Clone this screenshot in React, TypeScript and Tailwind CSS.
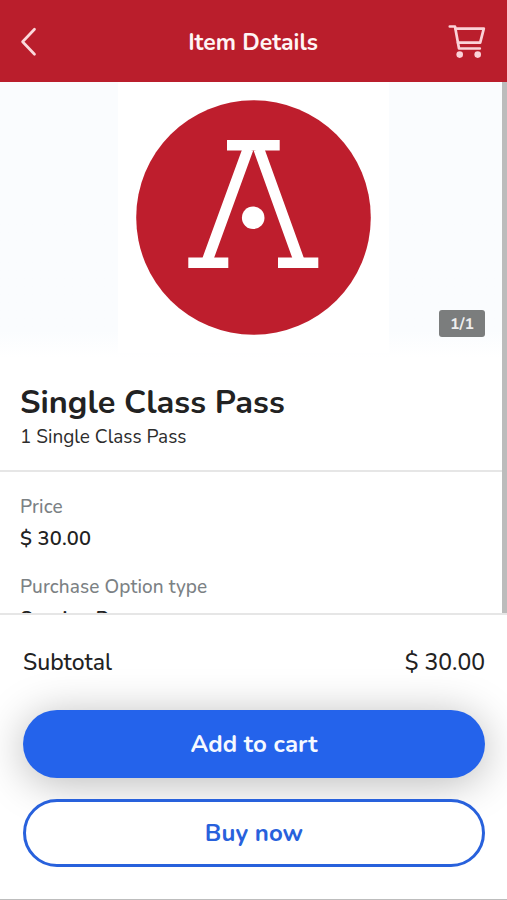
function CartIcon() {
  return (
    <svg className="h-9 w-10" viewBox="0 0 40 36" fill="none" stroke="#fbd3d8" strokeWidth="2.7" strokeLinecap="round" strokeLinejoin="round">
      <path d="M2.8 3.5h5.2l4 22h20.8" />
      <path d="M8.4 5.6h28.4l-3.6 14.1H11" />
      <circle cx="12.7" cy="31.6" r="3.3" fill="#fbd3d8" stroke="none" />
      <circle cx="30.7" cy="31.6" r="3.3" fill="#fbd3d8" stroke="none" />
    </svg>
  )
}

function StudioLogo() {
  return (
    <svg className="h-[235px] w-[235px]" viewBox="0 0 235 235" fill="none" stroke="#fff">
      <circle cx="117.5" cy="117.5" r="117.3" fill="#be1e2d" stroke="none" />
      <path d="M91 45.3h52.7M52.3 162.8h40M142 162.8h40.3" strokeWidth="10.6" />
      <path d="M112 49 71.5 160M122.8 49l40 111" strokeWidth="10.9" />
      <circle cx="117.2" cy="117.7" r="11.3" fill="#fff" stroke="none" />
    </svg>
  )
}

function Header() {
  return (
    <header className="flex h-[82px] shrink-0 items-center justify-between bg-[#ba1e2c] pr-5 pl-[19px]">
      <button aria-label="Back" className="w-10 pl-px">
        <svg className="h-8 w-5" viewBox="0 0 20 32" fill="none" stroke="#fbd9dc" strokeWidth="2.7" strokeLinecap="round" strokeLinejoin="round">
          <path d="M14.5 4.2 2.6 16.8l11.9 12.4" />
        </svg>
      </button>
      <h1 className="pt-1 text-[23px] font-bold text-[#fff5f5]">Item Details</h1>
      <button aria-label="Cart">
        <CartIcon />
      </button>
    </header>
  )
}

export default function App() {
  return (
    <div className="flex h-[900px] w-[507px] flex-col overflow-hidden border-b border-[#bdbdbd] bg-white font-[Nunito,Lato,sans-serif] text-[#222]">
      <Header />

      <div className="flex h-[531px] shrink-0 overflow-hidden">
        <main className="min-w-0 flex-1">
          {/* Gallery */}
          <div className="relative flex h-[276px] justify-center bg-linear-to-b from-[#fafcfe] from-90% to-white pl-1">
            <div className="flex h-[271px] w-[271px] justify-center bg-white pt-[18px]">
              <StudioLogo />
            </div>
            <span className="absolute right-[17px] bottom-[21px] flex h-[27px] w-[46px] items-center justify-center rounded-[3px] bg-[#7b7d7d] text-[16px] font-bold text-[#eee]">
              1/1
            </span>
          </div>

          {/* Title */}
          <section className="h-[114px] border-b-2 border-[#e6e6e6] px-5 pt-[23px]">
            <h2 className="text-[32.5px] leading-[42px] font-bold">Single Class Pass</h2>
            <p className="mt-px text-[19px] leading-[26px] text-[#2c2c2c]">1 Single Class Pass</p>
          </section>

          {/* Details */}
          <dl className="px-5 pt-[21px]">
            <dt className="text-[19px] leading-7 font-medium tracking-[0.1px] text-[#7b8184]">Price</dt>
            <dd className="pt-1 text-[20px] leading-7 font-semibold tracking-[0.15px]">$ 30.00</dd>
            <dt className="pt-5 text-[19px] leading-7 font-medium tracking-[0.1px] text-[#7b8184]">Purchase Option type</dt>
            <dd className="pt-1 text-[20px] leading-7 font-semibold">Session Pass</dd>
          </dl>
        </main>
        <div className="w-[5px] bg-[#bcbcbc]"></div>
      </div>

      <footer className="flex-1 border-t-2 border-[#e6e6e6] pr-[22px] pl-[23px]">
        <div className="flex h-[95px] items-center justify-between pt-0.5 text-[23px] font-medium">
          <span>Subtotal</span>
          <span>$ 30.00</span>
        </div>
        <button className="block h-[68px] w-full rounded-full bg-[#2463eb] text-[24px] font-bold tracking-[0.1px] text-[#f5f9ff] shadow-[0_5px_44px_rgba(0,0,0,0.28)]">
          Add to cart
        </button>
        <button className="relative mt-[21px] block h-[68px] w-full rounded-full border-[3px] border-[#2861dc] bg-white text-[24px] font-bold tracking-[0.1px] text-[#2861dc]">
          Buy now
        </button>
      </footer>
    </div>
  )
}
